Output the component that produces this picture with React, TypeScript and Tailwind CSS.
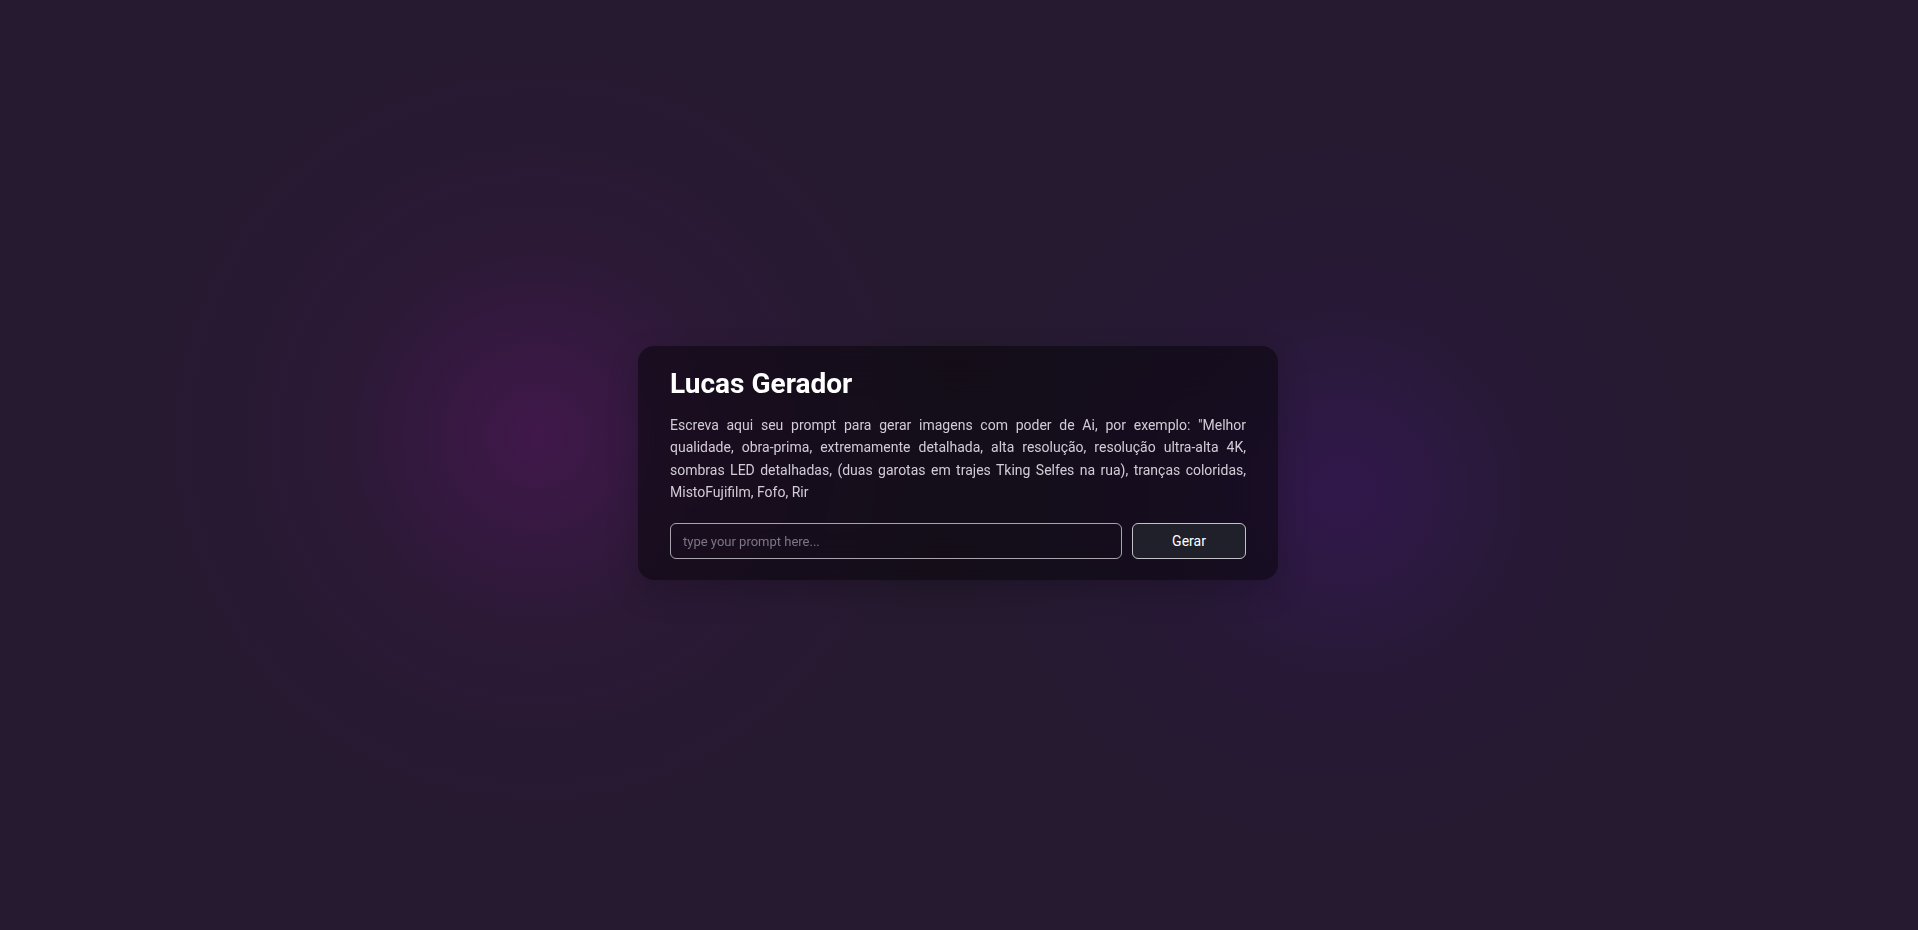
export default function App() {
  return (
    <div className="min-h-screen w-full flex items-center justify-center pb-1 pr-[2px] bg-[#251a2f] bg-[radial-gradient(circle_420px_at_28%_47%,rgba(66,24,76,0.95),rgba(50,24,62,0.5)_45%,transparent_100%),radial-gradient(circle_400px_at_70%_53%,rgba(50,24,78,0.95),rgba(42,24,62,0.5)_45%,transparent_100%)] font-['Roboto',sans-serif]">
      {/* Card */}
      <div className="w-[640px] rounded-2xl bg-black/45 backdrop-blur-xl shadow-[0_12px_32px_rgba(0,0,0,0.18)] pt-6 pb-[21px] px-8">
        <h1 className="text-[28px] leading-none font-bold text-white mb-4">Lucas Gerador</h1>
        <p className="text-sm leading-[1.6] text-[#d2ccd6] text-justify">
          Escreva aqui seu prompt para gerar imagens com poder de Ai, por exemplo: "Melhor qualidade, obra-prima,
          extremamente detalhada, alta resolução, resolução ultra-alta 4K, sombras LED detalhadas, (duas garotas em
          trajes Tking Selfes na rua), tranças coloridas, MistoFujifilm, Fofo, Rir
        </p>
        <div className="mt-5 flex gap-2.5">
          <input
            type="text"
            placeholder="type your prompt here..."
            className="flex-1 h-9 rounded-md border border-[#a9a3ae] bg-transparent px-3 text-[13px] text-white placeholder:text-[#7d7684] outline-none"
          />
          <button className="w-[114px] h-9 rounded-md border border-[#c4c0c8] bg-[#20202a] text-sm text-white">
            Gerar
          </button>
        </div>
      </div>
    </div>
  );
}
